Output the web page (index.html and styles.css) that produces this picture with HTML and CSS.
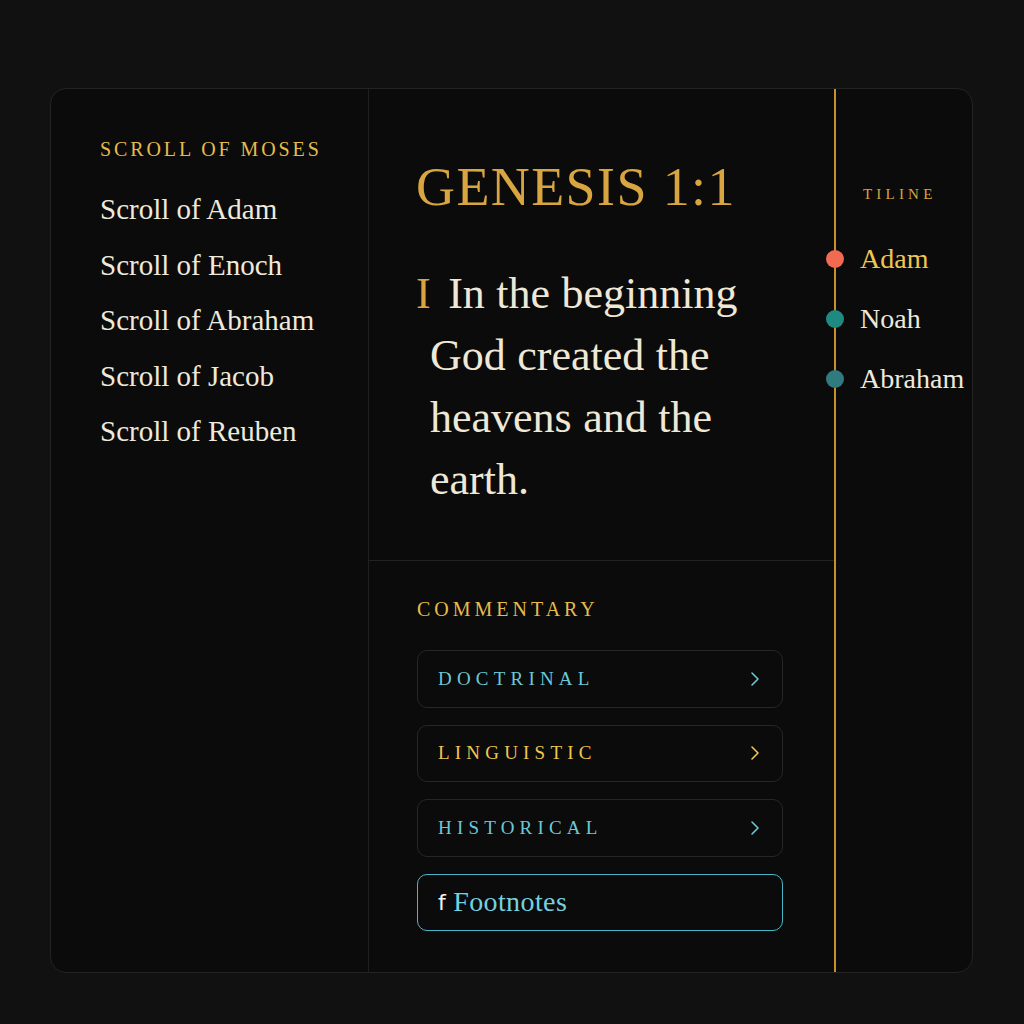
FILE: index.html
```html
<!DOCTYPE html>
<html>
<head>
<meta charset="utf-8">
<link rel="stylesheet" href="styles.css">
</head>
<body>
<div class="card">
  <aside class="left">
    <div class="left-title">SCROLL OF MOSES</div>
    <ul class="scrolls">
      <li>Scroll of Adam</li>
      <li>Scroll of Enoch</li>
      <li>Scroll of Abraham</li>
      <li>Scroll of Jacob</li>
      <li>Scroll of Reuben</li>
    </ul>
  </aside>
  <main class="middle">
    <section class="reading">
      <h1 class="ref">GENESIS 1:1</h1>
      <p class="verse"><span class="vnum">I</span> In the beginning God created the heavens and the earth.</p>
    </section>
    <section class="commentary">
      <div class="com-title">COMMENTARY</div>
      <div class="buttons">
        <div class="btn cyan"><span>DOCTRINAL</span><svg class="chev" viewBox="0 0 10 16" width="10" height="16"><path d="M2 2 L8 8 L2 14" fill="none" stroke="currentColor" stroke-width="1.6" stroke-linecap="round" stroke-linejoin="round"/></svg></div>
        <div class="btn gold"><span>LINGUISTIC</span><svg class="chev" viewBox="0 0 10 16" width="10" height="16"><path d="M2 2 L8 8 L2 14" fill="none" stroke="currentColor" stroke-width="1.6" stroke-linecap="round" stroke-linejoin="round"/></svg></div>
        <div class="btn cyan"><span>HISTORICAL</span><svg class="chev" viewBox="0 0 10 16" width="10" height="16"><path d="M2 2 L8 8 L2 14" fill="none" stroke="currentColor" stroke-width="1.6" stroke-linecap="round" stroke-linejoin="round"/></svg></div>
        <div class="btn foot"><span class="f">f</span><span class="foot-label">Footnotes</span></div>
      </div>
    </section>
  </main>
  <aside class="right">
    <div class="tl-title">TILINE</div>
    <ul class="timeline">
      <li class="active"><span class="dot coral"></span>Adam</li>
      <li><span class="dot teal"></span>Noah</li>
      <li><span class="dot slate"></span>Abraham</li>
    </ul>
  </aside>
</div>
</body>
</html>
```

FILE: styles.css
```css
* { box-sizing: border-box; }
html, body { margin: 0; padding: 0; }
body {
  background: #111111;
  width: 1024px;
  height: 1024px;
  font-family: "Liberation Serif", "Times New Roman", serif;
  padding: 88px 51px 51px 50px;
}
.card {
  width: 923px;
  height: 885px;
  background: #0b0b0b;
  border: 1px solid #232323;
  border-radius: 16px;
  display: grid;
  grid-template-columns: 318px 465px 1fr;
}
.left {
  border-right: 1px solid #1f1f1f;
  padding: 48px 0 0 49px;
}
.left-title {
  color: #e6bb4c;
  font-size: 20px;
  letter-spacing: 2.9px;
  line-height: 24px;
}
.scrolls {
  list-style: none;
  margin: 21px 0 0 0;
  padding: 0;
}
.scrolls li {
  color: #efe9dc;
  font-size: 29px;
  line-height: 55.5px;
}
.middle {
  display: flex;
  flex-direction: column;
}
.reading {
  height: 472px;
  border-bottom: 1px solid #222;
  padding: 66px 0 0 47px;
}
.ref {
  margin: 0;
  font-weight: normal;
  color: #d9a540;
  font-size: 54px;
  line-height: 65px;
  letter-spacing: 1.4px;
}
.verse {
  margin: 43px 0 0 0;
  padding-left: 14px;
  color: #efe8d6;
  font-size: 44px;
  line-height: 62px;
  width: 340px;
  word-spacing: 0.5px;
}
.vnum {
  color: #d9a540;
  margin-left: -14px;
  margin-right: 6px;
}
.commentary {
  padding: 36px 0 0 48px;
}
.com-title {
  color: #e6bb4c;
  font-size: 20px;
  letter-spacing: 4px;
  line-height: 24px;
}
.buttons {
  margin-top: 29px;
  width: 366px;
  display: flex;
  flex-direction: column;
  gap: 17px;
}
.btn {
  height: 57.5px;
  border: 1px solid #262626;
  border-radius: 10px;
  display: flex;
  align-items: center;
  justify-content: space-between;
  padding: 0 22px 0 20px;
  font-size: 19px;
  letter-spacing: 5.2px;
}
.btn.cyan { color: #6cc8d6; }
.btn.gold { color: #efc650; }
.chev { display: block; }
.btn.foot {
  border: 1px solid #4cb6c8;
  justify-content: flex-start;
  letter-spacing: 0.4px;
  font-size: 28px;
  color: #74d2e0;
}
.f {
  color: #f4f4f4;
  margin-right: 7px;
  font-family: "DejaVu Sans", sans-serif;
  font-size: 22px;
}
.right {
  border-left: 2px solid #c98f2a;
  padding-top: 96px;
}
.tl-title {
  color: #d7a43e;
  font-size: 15px;
  letter-spacing: 4.2px;
  line-height: 18px;
  padding-left: 27px;
}
.timeline {
  list-style: none;
  margin: 26px 0 0 0;
  padding: 0;
}
.timeline li {
  display: flex;
  align-items: center;
  height: 60px;
  color: #efe9dc;
  font-size: 28px;
  margin-left: -10px;
  white-space: nowrap;
}
.timeline li.active { color: #efc650; }
.dot {
  width: 18px;
  height: 18px;
  border-radius: 50%;
  margin-right: 16px;
  flex: none;
}
.dot.coral { background: #f26a52; }
.dot.teal { background: #1f8a82; }
.dot.slate { background: #2f7b80; }
```
